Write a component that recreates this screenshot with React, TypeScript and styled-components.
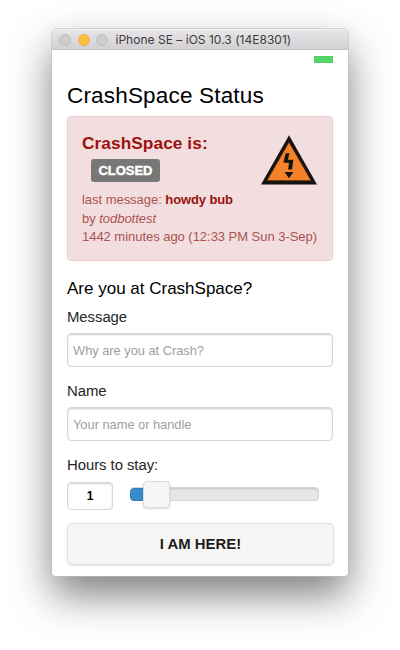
import React from "react";
import styled, { createGlobalStyle } from "styled-components";

const GlobalStyle = createGlobalStyle`
  * { box-sizing: border-box; }
  html, body { margin: 0; background: #fff; }
  body {
    height: 650px;
    overflow: hidden;
    font-family: "Liberation Sans", Arial, Helvetica, sans-serif;
    color: #1c1c1c;
  }
  h1, h2, h3, p { margin: 0; }
`;

const Desktop = styled.div`
  height: 650px;
  padding: 29px 52px 0 52px;
  overflow: hidden;
`;

const Window = styled.main`
  width: 296px;
  height: 547px;
  border-radius: 4px;
  background: #fff;
  box-shadow: 0 0 0 1px rgba(190, 190, 190, 0.6), 0 19px 40px rgba(0, 0, 0, 0.5);
`;

const TitleBar = styled.header`
  display: flex;
  align-items: center;
  height: 21px;
  padding-left: 7px;
  border-radius: 4px 4px 0 0;
  border-top: 1px solid #f2f1f2;
  border-bottom: 1px solid #c3c1c3;
  background: linear-gradient(#e8e6e8, #d2d0d2);
`;

const Light = styled.i<{ $on?: boolean }>`
  width: 12px;
  height: 12px;
  margin-right: 6.5px;
  border-radius: 50%;
  border: 1px solid ${(p) => (p.$on ? "#f2b03c" : "#bfbdbf")};
  background: ${(p) => (p.$on ? "#fdbc40" : "#cecdce")};
`;

const WindowTitle = styled.span`
  margin-left: 1px;
  padding-top: 1px;
  font: 12px/18px Inter, Roboto, sans-serif;
  letter-spacing: 0.02px;
  white-space: nowrap;
  color: #3d3b3d;
`;

const StatusBar = styled.div`
  display: flex;
  justify-content: flex-end;
  height: 20px;
  padding: 6px 15px 0 0;
`;

const Battery = styled.i`
  width: 19px;
  height: 7px;
  border: 1px solid #4fd366;
  background: #53d769;
`;

const Page = styled.div`
  padding: 9px 15px 0 15px;
`;

const PageTitle = styled.h1`
  height: 37px;
  padding-top: 3px;
  font-size: 22.5px;
  line-height: 27px;
  letter-spacing: 0.18px;
  font-weight: 400;
  white-space: nowrap;
  color: #000;
`;

const Alert = styled.section`
  display: flex;
  justify-content: space-between;
  height: 145px;
  padding: 17px 15px 0 14px;
  border: 1px solid #ebccd1;
  border-radius: 4px;
  background: #f2dede;
  color: #ad5252;
  font-size: 13px;
  line-height: 18.5px;
  letter-spacing: -0.035px;
  white-space: nowrap;
  & > svg { flex: none; margin: 1px 0 0; }
`;

const AlertBody = styled.div`
  width: 178px;
`;

const AlertTitle = styled.h3`
  font-size: 17.3px;
  line-height: 19px;
  letter-spacing: 0.06px;
  color: #a01010;
`;

const Badge = styled.span`
  display: block;
  width: 69px;
  height: 23px;
  margin: 6px 0 9px 9px;
  border-radius: 3px;
  background: #777;
  color: #fff;
  font-size: 13px;
  font-weight: 700;
  line-height: 23px;
  text-align: center;
  -webkit-text-stroke: 0.4px #fff;
`;

const Strong = styled.b`
  letter-spacing: -0.12px;
  color: #991010;
`;

const FormTitle = styled.h2`
  margin-top: 18px;
  font-size: 17px;
  line-height: 20px;
  font-weight: 400;
  color: #000;
`;

const Label = styled.label<{ $gap: number; $after: number }>`
  display: block;
  margin-top: ${(p) => p.$gap}px;
  margin-bottom: ${(p) => p.$after}px;
  font-size: 14.9px;
  line-height: 18px;
  letter-spacing: -0.05px;
  color: #262626;
`;

const Input = styled.input`
  display: block;
  width: 266px;
  height: 34px;
  padding: 1px 5px 0;
  border: 1px solid #d8d8d8;
  border-radius: 4px;
  background: #fff;
  box-shadow: inset 0 1px 2px rgba(0, 0, 0, 0.2);
  font: 12.9px "Liberation Sans", Arial, sans-serif;
  letter-spacing: -0.04px;
  outline: none;
  &::placeholder { color: #a0a0a0; opacity: 1; }
`;

const SliderRow = styled.div`
  display: flex;
  align-items: center;
  height: 28px;
`;

const HoursBox = styled.div`
  width: 46px;
  height: 28px;
  margin-right: 17px;
  border: 1px solid #d8d8d8;
  border-radius: 4px;
  box-shadow: inset 0 1px 2px rgba(0, 0, 0, 0.18);
  font-size: 12px;
  font-weight: 700;
  line-height: 27px;
  text-align: center;
  color: #000;
`;

const Track = styled.div`
  display: flex;
  align-items: center;
  width: 189px;
  height: 14px;
  margin-top: -4px;
  border: 1px solid #d4d4d4;
  border-radius: 4px;
  background: #e7e7e7;
  box-shadow: inset 0 1px 2px rgba(0, 0, 0, 0.15);
`;

const Fill = styled.div`
  width: 14px;
  height: 13px;
  margin-left: -1px;
  border: 1px solid #2f7dbd;
  border-radius: 4px 0 0 4px;
  background: #388ccc;
`;

const Handle = styled.div`
  flex: none;
  width: 27px;
  height: 27px;
  margin-left: -1px;
  border: 1px solid #dadada;
  border-radius: 4px;
  background: #f6f6f6;
  box-shadow: 0 1px 2px rgba(0, 0, 0, 0.15);
`;

const SubmitButton = styled.button`
  display: block;
  width: 267px;
  height: 42px;
  margin-top: 13px;
  padding: 0;
  border: 1px solid #dfdfdf;
  border-radius: 5px;
  background: #f6f6f6;
  box-shadow: 0 1px 2px rgba(0, 0, 0, 0.1);
  font: 700 14.9px "Liberation Sans", Arial, sans-serif;
  color: #1c1c1c;
`;

const HazardSign = () => (
  <svg width="56" height="50" viewBox="0 0 56 50">
    <path d="M28 0.3 56 49.5H0Z" fill="#161310" />
    <path d="M28 7.2 50 45.6H6Z" fill="#f5822a" stroke="#57300f" strokeWidth=".6" />
    <path d="M24.7 18.3h3.8l-1.6 6.5h5.4l-1.2 9.7h-4l.9-6.6-5.6-.5Z" fill="#161310" />
    <path d="M23.5 37h9L28 43.3Z" fill="#161310" />
  </svg>
);

export default function App() {
  return (
    <>
      <GlobalStyle />
      <Desktop>
        <Window>
          <TitleBar>
            <Light />
            <Light $on />
            <Light />
            <WindowTitle>iPhone SE – iOS 10.3 (14E8301)</WindowTitle>
          </TitleBar>
          <StatusBar>
            <Battery />
          </StatusBar>
          <Page>
            <PageTitle>CrashSpace Status</PageTitle>
            <Alert>
              <AlertBody>
                <AlertTitle>CrashSpace is:</AlertTitle>
                <Badge>CLOSED</Badge>
                <p>last message: <Strong>howdy bub</Strong></p>
                <p>by <em>todbottest</em></p>
                <p>1442 minutes ago (12:33 PM Sun 3-Sep)</p>
              </AlertBody>
              <HazardSign />
            </Alert>
            <FormTitle>Are you at CrashSpace?</FormTitle>
            <Label htmlFor="message" $gap={9} $after={7}>Message</Label>
            <Input id="message" placeholder="Why are you at Crash?" />
            <Label htmlFor="name" $gap={15} $after={7}>Name</Label>
            <Input id="name" placeholder="Your name or handle" />
            <Label $gap={15} $after={8}>Hours to stay:</Label>
            <SliderRow>
              <HoursBox>1</HoursBox>
              <Track>
                <Fill />
                <Handle />
              </Track>
            </SliderRow>
            <SubmitButton>I AM HERE!</SubmitButton>
          </Page>
        </Window>
      </Desktop>
    </>
  );
}
